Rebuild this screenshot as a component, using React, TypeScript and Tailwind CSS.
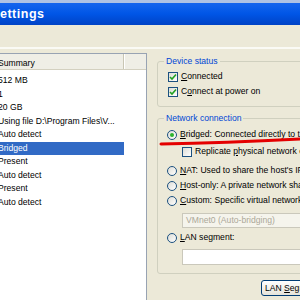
const rows = [
  "512 MB",
  "1",
  "20 GB",
  "Using file D:\\Program Files\\V...",
  "Auto detect",
  "Bridged",
  "Present",
  "Auto detect",
  "Present",
  "Auto detect",
];

const CheckBox = ({ checked }: { checked?: boolean }) => (
  <span className="w-[10px] h-[10px] shrink-0 border border-[#1C5180] bg-linear-to-br from-[#DCDCD6] to-white flex items-center justify-center">
    {checked && (
      <svg width="8" height="8" viewBox="0 0 8 8">
        <path d="M1 4 L3 6 L7 1.5" fill="none" stroke="#21A121" strokeWidth="1.6" />
      </svg>
    )}
  </span>
);

const Radio = ({ checked }: { checked?: boolean }) => (
  <span className="w-[10px] h-[10px] shrink-0 rounded-full border border-[#1C5180] bg-linear-to-br from-[#DCDCD6] to-white flex items-center justify-center">
    {checked && <span className="w-[4px] h-[4px] rounded-full bg-[#2DB42D]" />}
  </span>
);

const Option = ({
  radio,
  checked,
  children,
  className,
}: {
  radio?: boolean;
  checked?: boolean;
  children: React.ReactNode;
  className?: string;
}) => (
  <div className={"h-[15px] flex items-center gap-[3px] whitespace-nowrap " + (className || "")}>
    {radio ? <Radio checked={checked} /> : <CheckBox checked={checked} />}
    <span>{children}</span>
  </div>
);

const Group = ({
  title,
  className,
  children,
}: {
  title: string;
  className?: string;
  children: React.ReactNode;
}) => (
  <div className={"relative border border-[#D0D0BF] rounded-[3px] " + (className || "")}>
    <span className="absolute -top-[7px] left-[6px] px-[2px] bg-[#ECE9D8] text-[#0046D5] leading-[12px]">
      {title}
    </span>
    {children}
  </div>
);

export default function App() {
  return (
    <div className="w-[300px] h-[300px] overflow-hidden bg-[#ECE9D8] relative font-['Liberation_Sans',Arial,sans-serif] text-[8.6px] text-black">
      <div className="w-[440px]">
        {/* title bar */}
        <div className="h-[25px] border-t-[3px] border-[#AFC2E4] bg-linear-to-b from-[#1565EE] via-[#0055E6] to-[#0043C6] flex items-center">
          <span className="text-white font-bold text-[12.5px] tracking-[0.5px] leading-none pt-[1px]">
            ettings
          </span>
        </div>
        {/* tab strip */}
        <div className="h-[22px]" />
        <div className="h-[2px] bg-[#FAFAF5]" />

        <div className="flex">
          {/* hardware list */}
          <div className="ml-[-61px] mt-[4px] w-[208px] h-[260px] border border-[#98A3B3] bg-white">
            <div className="h-[16px] flex bg-[#EFEEE6] border-b border-[#D3D0C0]">
              <div className="w-[184px] pl-[58px] pt-[3px] border-r border-[#C9C6B4] flex items-center">
                Summary
              </div>
              <div className="flex-1 border-l border-white" />
            </div>
            <div className="pt-[4px]">
              {rows.map((r, i) => (
                <div
                  key={i}
                  className={
                    "w-[184px] h-[13.5px] pl-[58px] flex items-center whitespace-nowrap " +
                    (r === "Bridged" ? "bg-[#316AC5] text-white" : "")
                  }
                >
                  {r}
                </div>
              ))}
            </div>
          </div>

          {/* right pane */}
          <div className="ml-[10px] w-[200px]">
            <Group title="Device status" className="mt-[12px] h-[46px] pl-[10px] pt-[7px]">
              <Option checked>
                <u>C</u>onnected
              </Option>
              <Option checked>
                C<u>o</u>nnect at power on
              </Option>
            </Group>

            <Group title="Network connection" className="mt-[11px] h-[156px] pl-[9px] pt-[8px]">
              <Option radio checked>
                <u>B</u>ridged: Connected directly to the physical network
              </Option>
              <Option className="ml-[15px] mt-[2px]">
                Replicate <u>p</u>hysical network connection state
              </Option>
              <Option radio className="mt-[4px]">
                <u>N</u>AT: Used to share the host's IP address
              </Option>
              <Option radio>
                <u>H</u>ost-only: A private network shared with the host
              </Option>
              <Option radio>
                <u>C</u>ustom: Specific virtual network
              </Option>
              <div className="ml-[15px] mt-[5px] h-[15px] border border-[#CAC8BB] bg-[#F5F4EC] text-[#ACA899] flex items-center pl-[3px] whitespace-nowrap">
                VMnet0 (Auto-bridging)
              </div>
              <Option radio className="mt-[2px]">
                <u>L</u>AN segment:
              </Option>
              <div className="ml-[15px] mt-[4px] h-[16px] border border-[#CAC8BB] bg-white" />
            </Group>

            <div className="mt-[6px] ml-[104px] w-[90px] h-[16px] border border-[#003C74] rounded-[3px] bg-linear-to-b from-white to-[#E6E4DA] flex items-center pl-[3px] whitespace-nowrap">
              <span>
                LAN <u>S</u>egments...
              </span>
            </div>
          </div>
        </div>
      </div>

      {/* red annotation stroke */}
      <svg className="absolute left-0 top-0 pointer-events-none" width="300" height="300">
        <path d="M161 144 Q 225 143 302 139" fill="none" stroke="#E40000" strokeWidth="3" strokeLinecap="round" />
      </svg>
    </div>
  );
}
